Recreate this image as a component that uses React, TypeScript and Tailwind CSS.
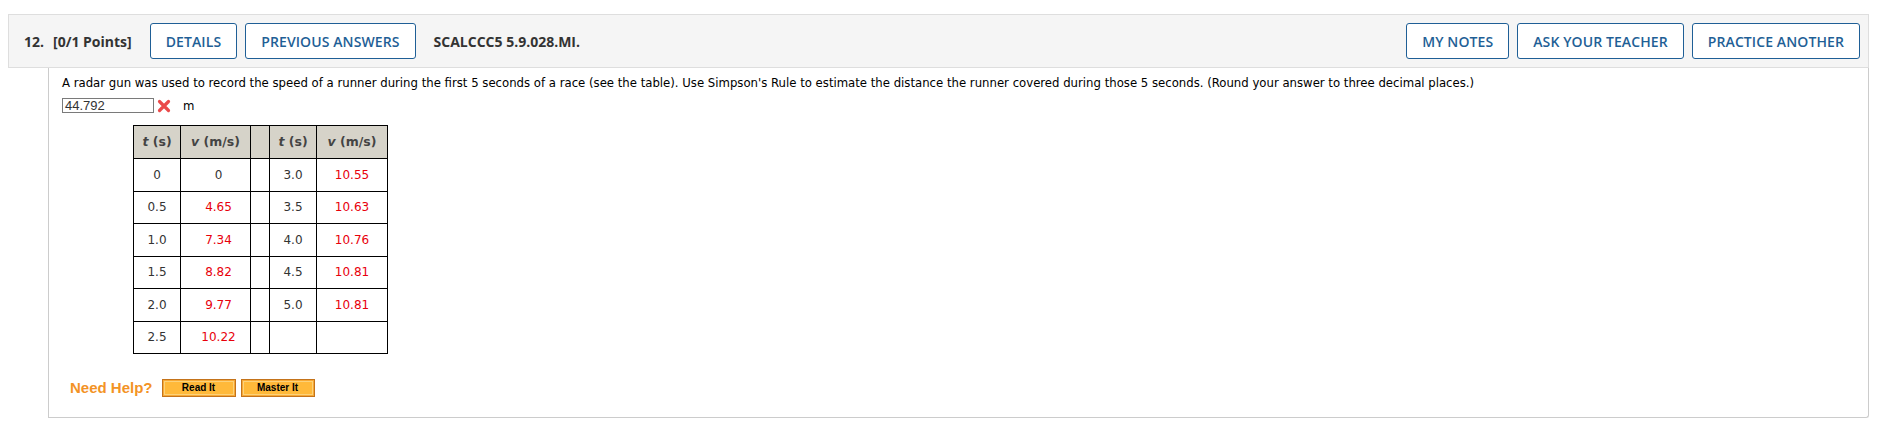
import React from 'react'

const ROWS: [string, string, string, string][] = [
  ['0', '0', '3.0', '10.55'],
  ['0.5', '4.65', '3.5', '10.63'],
  ['1.0', '7.34', '4.0', '10.76'],
  ['1.5', '8.82', '4.5', '10.81'],
  ['2.0', '9.77', '5.0', '10.81'],
  ['2.5', '10.22', '', ''],
]

const openSans = { fontFamily: '"Open Sans", "Liberation Sans", sans-serif' }

function HeaderButton({ label }: { label: string }) {
  return (
    <button className="h-[36px] px-[15px] border border-[#1f5f96] rounded-[3px] bg-white text-[14px] font-semibold text-[#1f5f96] tracking-[0.1px]">
      {label}
    </button>
  )
}

function HelpButton({ label }: { label: string }) {
  return (
    <button className="w-[74px] h-[18px] border border-[#c4731a] bg-[#f7a935] p-[1px]">
      <span className="flex items-center justify-center h-full border border-[#fcd27a] bg-[#ffb93a] text-[10px] font-bold text-black font-['Liberation_Sans',Arial,sans-serif] leading-none">
        {label}
      </span>
    </button>
  )
}

export default function App() {
  return (
    <div className="min-h-screen bg-white pt-[14px] pl-[8px] pr-[10px]">
      {/* question header */}
      <div
        className="flex items-center justify-between h-[54px] border border-[#dedede] bg-[#f5f5f5] pl-[15px] pr-[8px]"
        style={openSans}
      >
        <div className="flex items-center">
          <span className="text-[14px] font-bold text-[#333]">12.</span>
          <span className="ml-[9px] text-[14px] font-bold text-[#333]">[0/1 Points]</span>
          <div className="flex items-center gap-[8px] ml-[18px]">
            <HeaderButton label="DETAILS" />
            <HeaderButton label="PREVIOUS ANSWERS" />
          </div>
          <span className="ml-[18px] text-[14px] font-bold text-[#333]">SCALCCC5 5.9.028.MI.</span>
        </div>
        <div className="flex items-center gap-[8px]">
          <HeaderButton label="MY NOTES" />
          <HeaderButton label="ASK YOUR TEACHER" />
          <HeaderButton label="PRACTICE ANOTHER" />
        </div>
      </div>

      {/* question body */}
      <div className="ml-[40px] border-l border-r border-b border-[#cccccc] rounded-br-[3px] pl-[13px] pt-[6px] pb-[24px] h-[350px]">
        <p className="text-[13px] leading-[17px] text-black font-['DejaVu_Sans_Condensed','DejaVu_Sans',sans-serif]">
          A radar gun was used to record the speed of a runner during the first 5 seconds of a race (see the table). Use Simpson's Rule to estimate the distance the runner covered during those 5 seconds. (Round your answer to three decimal places.)
        </p>

        <div className="flex items-center mt-[7px] h-[15px]">
          <div className="w-[92px] h-[15px] border border-[#7a7a7a] pl-[2px] text-[13px] leading-[13px] text-[#333] font-['Liberation_Sans',Arial,sans-serif]">
            44.792
          </div>
          <svg className="ml-[3px] w-[14px] h-[14px]" viewBox="0 0 14 14">
            <path d="M2.5 2.5 L11.5 11.5 M11.5 2.5 L2.5 11.5" stroke="#ea4a4a" strokeWidth="3.2" strokeLinecap="round" />
          </svg>
          <span className="ml-[12px] text-[13px] text-black font-['DejaVu_Sans_Condensed','DejaVu_Sans',sans-serif]">m</span>
        </div>

        <table className="ml-[71px] mt-[12px] border-collapse text-[12px] font-['DejaVu_Sans',Verdana,sans-serif]">
          <thead>
            <tr className="h-[33px] bg-[#d6d3c9] text-[#444] font-bold text-[12.5px]">
              <th className="w-[47px] border border-black">
                <i>t</i> (s)
              </th>
              <th className="w-[70px] border border-black">
                <i>v</i> (m/s)
              </th>
              <th className="w-[19px] border border-black"></th>
              <th className="w-[47px] border border-black">
                <i>t</i> (s)
              </th>
              <th className="w-[71px] border border-black">
                <i>v</i> (m/s)
              </th>
            </tr>
          </thead>
          <tbody>
            {ROWS.map((r, i) => (
              <tr key={i} className="h-[32.5px] text-center">
                <td className="border border-black text-[#333]">{r[0]}</td>
                <td className={`border border-black pl-[6px] ${r[1] === '0' ? 'text-[#333]' : 'text-[#e8000b]'}`}>{r[1]}</td>
                <td className="border border-black"></td>
                <td className="border border-black text-[#333]">{r[2]}</td>
                <td className="border border-black text-[#e8000b]">{r[3]}</td>
              </tr>
            ))}
          </tbody>
        </table>

        <div className="flex items-center ml-[8px] mt-[23px]">
          <span className="text-[15px] font-bold text-[#f39325] font-['Liberation_Sans',Arial,sans-serif]">Need Help?</span>
          <div className="flex items-center gap-[5px] ml-[9px]">
            <HelpButton label="Read It" />
            <HelpButton label="Master It" />
          </div>
        </div>
      </div>
    </div>
  )
}
